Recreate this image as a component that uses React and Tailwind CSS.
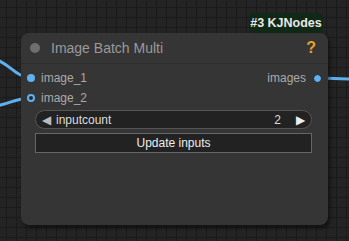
export default function App() {
  const font = { fontFamily: '"Liberation Sans", Arial, sans-serif' };

  return (
    <main
      className="relative w-[349px] h-[241px] overflow-hidden bg-[#242424] bg-[linear-gradient(to_right,#1a1a1a_1px,transparent_1px),linear-gradient(to_bottom,#1a1a1a_1px,transparent_1px)] bg-[size:10px_10px] bg-[position:6px_7px]"
      style={font}
    >
      {/* Links */}
      <svg className="absolute inset-0" width="349" height="241">
        <path d="M -5 59 C 10 64, 16 77, 31 78" stroke="#5fb0ee" strokeWidth="3" fill="none" />
        <path d="M -5 106 C 10 104, 16 98, 31 98" stroke="#5fb0ee" strokeWidth="3" fill="none" />
        <path d="M 318 78 L 352 79" stroke="#5fb0ee" strokeWidth="3" fill="none" />
      </svg>

      {/* Badge */}
      <div className="absolute left-[249px] top-[13px] w-[74px] h-[20px] rounded-t-[5px] bg-[#112816] flex items-center justify-center text-[12.5px] font-bold text-[#e8e8e8]">
        #3 KJNodes
      </div>

      {/* Node */}
      <section className="absolute left-[21px] top-[33px] w-[307px] h-[192px] rounded-[8px] bg-[#353535] shadow-[2px_3px_4px_rgba(0,0,0,0.5)] flex flex-col">
        {/* Title */}
        <div className="h-[31px] flex items-center border-b border-[#2c2c2c] pl-[9px] pr-[12px]">
          <span className="w-[10px] h-[10px] rounded-full bg-[#6e6e6e]" />
          <span className="ml-[11px] text-[14px] text-[#9a9a9a]">Image Batch Multi</span>
          <span className="ml-auto text-[16px] font-bold text-[#e6a12a]">?</span>
        </div>

        {/* Slots */}
        <div className="pt-[4px] flex flex-col text-[12px] text-[#aaaaaa]">
          <div className="h-[20px] flex items-center">
            <span className="ml-[6px] w-[8px] h-[8px] rounded-full bg-[#5fb0ee]" />
            <span className="ml-[6px]">image_1</span>
            <span className="ml-auto mr-[7px]">images</span>
            <span className="mr-[6px] w-[9px] h-[9px] rounded-full bg-[#5fb0ee] border border-[#222]" />
          </div>
          <div className="h-[20px] flex items-center">
            <span className="ml-[6px] w-[8px] h-[8px] rounded-full border-[2px] border-[#5fb0ee] bg-[#2a2a2a]" />
            <span className="ml-[6px]">image_2</span>
          </div>
        </div>

        {/* Widgets */}
        <div className="mt-[2px] ml-[14px] w-[277px] h-[19px] rounded-full bg-[#222222] border border-[#555555] flex items-center pl-[6px] pr-[6px] text-[12px] text-[#dddddd]">
          <span className="text-[12px] text-[#bbbbbb]">◀</span>
          <span className="ml-[5px]">inputcount</span>
          <span className="ml-auto">2</span>
          <span className="ml-[15px] text-[12px] text-[#eeeeee]">▶</span>
        </div>
        <button className="mt-[4px] ml-[14px] w-[277px] h-[20px] bg-[#222222] border border-[#666666] text-[12px] text-[#eeeeee] flex items-center justify-center">
          Update inputs
        </button>
      </section>
    </main>
  );
}
